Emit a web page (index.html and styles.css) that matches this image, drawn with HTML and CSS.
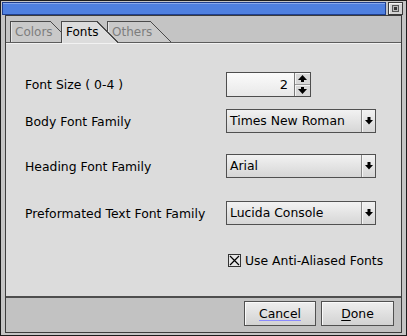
FILE: index.html
```html
<!DOCTYPE html>
<html lang="en">
<head>
    <meta charset="UTF-8">
    <title>Fonts</title>
    <link rel="stylesheet" href="styles.css">
</head>
<body>
    <div class="window">
        <div class="title-row">
            <div class="titlebar"></div>
            <div class="close"><span class="close-box"></span></div>
        </div>

        <div class="frame">
            <div class="tabs">
                <div class="tab tab-colors"><span>Colors</span></div>
                <div class="tab tab-fonts active"><span>Fonts</span></div>
                <div class="tab tab-others"><span>Others</span></div>
            </div>

            <div class="panel">
                <div class="row row-size">
                    <span class="label">Font Size ( 0-4 )</span>
                    <div class="spin">
                        <div class="spin-field">2</div>
                        <div class="spin-buttons">
                            <span class="spin-btn">
                                <svg width="9" height="8" viewBox="0 0 9 8"><polygon points="4.5,0 9,5 0,5" fill="#000"/><rect x="3" y="5" width="3" height="2" fill="#000"/></svg>
                            </span>
                            <span class="spin-btn">
                                <svg width="9" height="8" viewBox="0 0 9 8"><rect x="3" y="0" width="3" height="2" fill="#000"/><polygon points="0,2 9,2 4.5,7" fill="#000"/></svg>
                            </span>
                        </div>
                    </div>
                </div>

                <div class="row row-body">
                    <span class="label">Body Font Family</span>
                    <div class="select">
                        <div class="select-value">Times New Roman</div>
                        <div class="select-arrow">
                            <svg width="8" height="8" viewBox="0 0 8 8"><rect x="2.5" y="0" width="3" height="3" fill="#000"/><polygon points="0,3 8,3 4,7.5" fill="#000"/></svg>
                        </div>
                    </div>
                </div>

                <div class="row row-heading">
                    <span class="label">Heading Font Family</span>
                    <div class="select">
                        <div class="select-value">Arial</div>
                        <div class="select-arrow">
                            <svg width="8" height="8" viewBox="0 0 8 8"><rect x="2.5" y="0" width="3" height="3" fill="#000"/><polygon points="0,3 8,3 4,7.5" fill="#000"/></svg>
                        </div>
                    </div>
                </div>

                <div class="row row-pre">
                    <span class="label">Preformated Text Font Family</span>
                    <div class="select">
                        <div class="select-value">Lucida Console</div>
                        <div class="select-arrow">
                            <svg width="8" height="8" viewBox="0 0 8 8"><rect x="2.5" y="0" width="3" height="3" fill="#000"/><polygon points="0,3 8,3 4,7.5" fill="#000"/></svg>
                        </div>
                    </div>
                </div>

                <div class="row row-check">
                    <span class="checkbox">
                        <svg width="11" height="11" viewBox="0 0 11 11"><path d="M1 1 L10 10 M10 1 L1 10" stroke="#000" stroke-width="1.2"/></svg>
                    </span>
                    <span class="check-text">Use Anti-Aliased Fonts</span>
                </div>
            </div>

            <div class="buttonbar">
                <button class="button button-cancel"><span class="focus">Cancel</span></button>
                <button class="button button-done"><span class="mnemonic">D</span>one</button>
            </div>
        </div>
    </div>
</body>
</html>
```

FILE: styles.css
```css
body {
    margin: 0;
    font-family: "DejaVu Sans", sans-serif;
    font-size: 12.4px;
    color: #000;
    background: #c0c0c0;
}

.window {
    width: 407px;
    height: 336px;
    box-sizing: border-box;
    display: flex;
    flex-direction: column;
    padding: 1px 4px 2px 4px;
    border: 1px solid #1c1c1c;
    background: #c4c4c4;
}

.title-row {
    display: flex;
    gap: 2px;
    height: 13px;
    margin: 0 -1px 0 -3px;
}

.titlebar {
    flex: 1;
    box-sizing: border-box;
    background: #4f80e0;
    border: 1px solid #1f3f8f;
    box-shadow: inset 0 1px #86a8ee;
}

.close {
    width: 15px;
    box-sizing: border-box;
    display: flex;
    align-items: center;
    justify-content: center;
    border: 1px solid #3a3a3a;
    background: #d4d4d4;
    box-shadow: inset 1px 1px #f4f4f4;
}

.close-box {
    width: 5px;
    height: 5px;
    border: 1px solid #555;
    background: radial-gradient(#333 40%, #bbb 45%);
}

.frame {
    flex: 1;
    display: flex;
    flex-direction: column;
    border: 1px solid #3c3c3c;
}

.tabs {
    position: relative;
    z-index: 1;
    display: flex;
    align-items: flex-start;
    height: 26px;
    box-sizing: border-box;
    padding: 5px 0 0 4px;
    background: #c4c4c4;
    font-size: 12px;
}

.tab {
    position: relative;
    height: 21px;
    box-sizing: border-box;
    padding-left: 4px;
    border-top: 1px solid #4a4a4a;
    border-left: 1px solid #4a4a4a;
    background: #c9c9c9;
    box-shadow: inset 1px 0 #e6e6e6;
    color: #7d7d7d;
    line-height: 20px;
    white-space: nowrap;
}

.tab span {
    position: relative;
    z-index: 1;
}

.tab::after {
    content: '';
    position: absolute;
    top: -1px;
    bottom: 0;
    left: 100%;
    width: 21px;
    background: linear-gradient(to bottom left, transparent calc(50% - 0.7px), #4a4a4a calc(50% - 0.7px), #4a4a4a calc(50% + 0.7px), #c9c9c9 calc(50% + 0.7px));
}

.tab-colors {
    width: 40px;
    margin-right: 11px;
}

.tab-fonts {
    width: 36px;
    margin-right: 10px;
}

.tab-others {
    width: 43px;
}

.tab.active {
    z-index: 2;
    height: 22px;
    margin-bottom: -1px;
    background: #dcdcdc;
    color: #000;
}

.tab.active::after {
    background: linear-gradient(to bottom left, transparent calc(50% - 0.7px), #4a4a4a calc(50% - 0.7px), #4a4a4a calc(50% + 0.7px), #dcdcdc calc(50% + 0.7px));
}

.panel {
    flex: 1;
    padding: 29px 0 0 19px;
    background: #dcdcdc;
    border-top: 1px solid #5c5c5c;
    border-bottom: 2px solid #4e4e4e;
    box-shadow: inset 0 1px #f2f2f2;
}

.row {
    display: flex;
    align-items: center;
}

.label {
    width: 201px;
}

.row-size {
    height: 25px;
}

.row-body {
    height: 24px;
    margin-top: 12px;
}

.row-heading {
    height: 24px;
    margin-top: 21px;
}

.row-pre {
    height: 24px;
    margin-top: 23px;
}

.row-check {
    height: 13px;
    margin: 29px 0 0 203px;
    gap: 4px;
}

.spin {
    display: flex;
    width: 85px;
    height: 25px;
    box-sizing: border-box;
    border: 1px solid #4e4e4e;
}

.spin-field {
    width: 68px;
    box-sizing: border-box;
    padding-right: 6px;
    border-right: 1px solid #7a7a7a;
    background: linear-gradient(#fbfbfb, #e8e8e8);
    text-align: right;
    line-height: 23px;
    font-size: 13px;
}

.spin-buttons {
    flex: 1;
    display: flex;
    flex-direction: column;
    background: #d8d8d8;
}

.spin-btn {
    flex: 1;
    display: flex;
    align-items: center;
    justify-content: center;
    box-shadow: inset 1px 1px #f4f4f4;
}

.spin-btn + .spin-btn {
    border-top: 1px solid #9a9a9a;
}

.select {
    display: flex;
    width: 150px;
    height: 24px;
    box-sizing: border-box;
    border: 1px solid #505050;
    background: linear-gradient(#f2f2f2, #d6d6d6);
}

.select-value {
    width: 134px;
    padding-left: 3px;
    box-sizing: border-box;
    line-height: 22px;
}

.select-arrow {
    flex: 1;
    display: flex;
    align-items: center;
    justify-content: center;
    border-left: 1px solid #8a8a8a;
    box-shadow: inset 1px 0 #f6f6f6;
}

.checkbox {
    width: 13px;
    height: 13px;
    box-sizing: border-box;
    display: flex;
    align-items: center;
    justify-content: center;
    border: 1px solid #333;
    background: #e6e6e6;
}

.buttonbar {
    height: 34px;
    box-sizing: border-box;
    display: flex;
    justify-content: flex-end;
    align-items: flex-start;
    gap: 5px;
    padding: 3px 7px 0 0;
    background: #c2c2c2;
}

.button {
    height: 25px;
    margin: 0;
    padding: 0;
    border: 1px solid #505050;
    background: linear-gradient(#eeeeee, #d2d2d2);
    box-shadow: inset 1px 1px #fafafa;
    font-family: "DejaVu Sans", sans-serif;
    font-size: 12.4px;
    color: #000;
}

.button-cancel {
    width: 72px;
}

.button-done {
    width: 73px;
}

.focus {
    text-decoration: underline;
    text-decoration-color: #8a8aff;
    text-underline-offset: 2px;
}

.mnemonic {
    text-decoration: underline;
    text-underline-offset: 2px;
}
```
